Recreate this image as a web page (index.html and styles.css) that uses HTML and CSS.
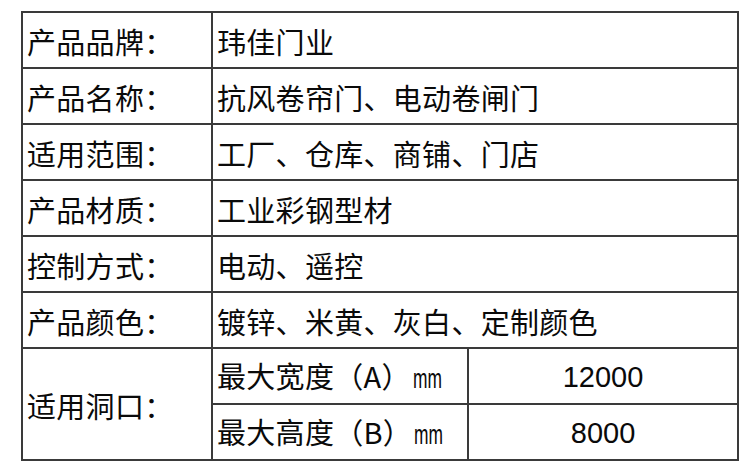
FILE: index.html
```html
<!DOCTYPE html>
<html lang="zh-CN">
<head>
<meta charset="utf-8">
<title>产品参数</title>
<link rel="stylesheet" href="styles.css">
</head>
<body>
<table class="spec">
  <colgroup>
    <col class="c-label">
    <col class="c-sub">
    <col class="c-val">
  </colgroup>
  <tbody>
    <tr><th>产品品牌：</th><td colspan="2">玮佳门业</td></tr>
    <tr><th>产品名称：</th><td colspan="2">抗风卷帘门、电动卷闸门</td></tr>
    <tr><th>适用范围：</th><td colspan="2">工厂、仓库、商铺、门店</td></tr>
    <tr><th>产品材质：</th><td colspan="2">工业彩钢型材</td></tr>
    <tr><th>控制方式：</th><td colspan="2">电动、遥控</td></tr>
    <tr><th>产品颜色：</th><td colspan="2">镀锌、米黄、灰白、定制颜色</td></tr>
    <tr><th rowspan="2">适用洞口：</th><td>最大宽度（A）<span class="unit">mm</span></td><td class="num">12000</td></tr>
    <tr><td>最大高度（B）<span class="unit">mm</span></td><td class="num">8000</td></tr>
  </tbody>
</table>
</body>
</html>
```

FILE: styles.css
```css
html, body {
  margin: 0;
  padding: 0;
  background: #ffffff;
}

body {
  padding: 11px 0 0 21px;
  font-family: "Noto Sans CJK SC", "Noto Sans", sans-serif;
  color: #0a0a0a;
}

.spec {
  border-collapse: collapse;
  table-layout: fixed;
  width: 716px;
}

.c-label { width: 190px; }
.c-sub { width: 256px; }
.c-val { width: 270px; }

.spec th,
.spec td {
  border: 2px solid #3a3a3a;
  height: 52px;
  padding: 2px 0 0 4px;
  font-size: 29px;
  letter-spacing: 0.3px;
  font-weight: 400;
  line-height: 1;
  text-align: left;
  vertical-align: middle;
  white-space: nowrap;
}

.spec td.num {
  text-align: center;
  padding-left: 0;
  letter-spacing: 0;
  font-family: "Liberation Sans", Arial, sans-serif;
  font-size: 29px;
}

.unit {
  display: inline-block;
  font-family: "Liberation Sans", Arial, sans-serif;
  font-size: 28px;
  letter-spacing: 0;
  transform: scaleX(0.62);
  transform-origin: left center;
  margin-left: 2px;
}
```
